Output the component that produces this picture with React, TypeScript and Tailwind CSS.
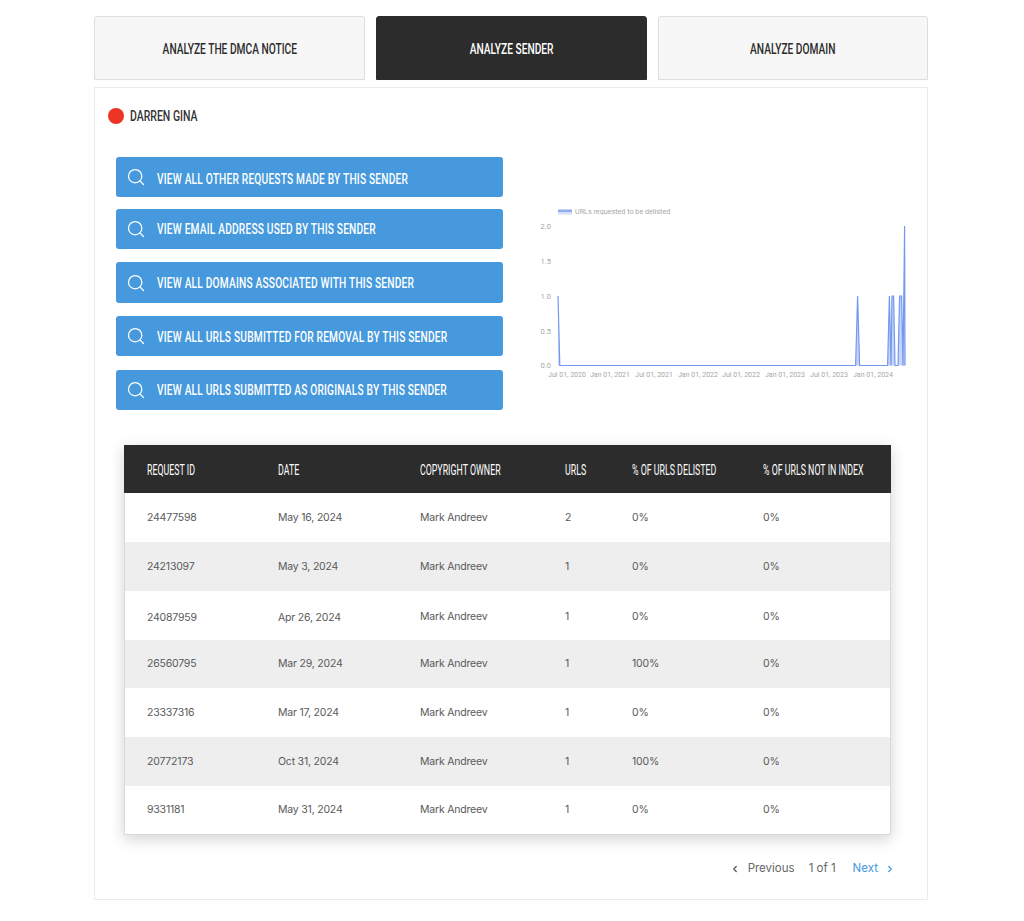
import React from "react";
import { Search, ChevronLeft, ChevronRight } from "lucide-react";

const tabs = [
  { title: "ANALYZE THE DMCA NOTICE", active: false },
  { title: "ANALYZE SENDER", active: true },
  { title: "ANALYZE DOMAIN", active: false },
];

const actions = [
  { title: "VIEW ALL OTHER REQUESTS MADE BY THIS SENDER", cls: "mb-[12px] h-[40px]", text: "pt-[4px]" },
  { title: "VIEW EMAIL ADDRESS USED BY THIS SENDER", cls: "mb-[13px] h-[40px]", text: "" },
  { title: "VIEW ALL DOMAINS ASSOCIATED WITH THIS SENDER", cls: "mb-[13px] h-[41px]", text: "pt-[2px]" },
  { title: "VIEW ALL URLS SUBMITTED FOR REMOVAL BY THIS SENDER", cls: "mb-[14px] h-[40px]", text: "pt-[2px]" },
  { title: "VIEW ALL URLS SUBMITTED AS ORIGINALS BY THIS SENDER", cls: "h-[40px]", text: "" },
];

const rows = [
  ["24477598", "May 16, 2024", "Mark Andreev", "2", "0%", "0%"],
  ["24213097", "May 3, 2024", "Mark Andreev", "1", "0%", "0%"],
  ["24087959", "Apr 26, 2024", "Mark Andreev", "1", "0%", "0%"],
  ["26560795", "Mar 29, 2024", "Mark Andreev", "1", "100%", "0%"],
  ["23337316", "Mar 17, 2024", "Mark Andreev", "1", "0%", "0%"],
  ["20772173", "Oct 31, 2024", "Mark Andreev", "1", "100%", "0%"],
  ["9331181", "May 31, 2024", "Mark Andreev", "1", "0%", "0%"],
];

const rowHeights = ["h-[49px]", "h-[49px]", "h-[49px]", "h-[48px]", "h-[49px]", "h-[49px]", "h-[48px]"];

const headers = ["REQUEST ID", "DATE", "COPYRIGHT OWNER", "URLS", "% OF URLS DELISTED", "% OF URLS NOT IN INDEX"];
const gridCols = "grid grid-cols-[131px_142px_145px_67px_131px_1fr]";
// Oswald нет, поэтому сужаем Roboto по горизонтали
const narrow = "font-['Roboto',sans-serif] whitespace-nowrap inline-block";

const xTicks = [
  ["Jul 01, 2020", 567],
  ["Jan 01, 2021", 610],
  ["Jul 01, 2021", 654],
  ["Jan 01, 2022", 698],
  ["Jul 01, 2022", 741],
  ["Jan 01, 2023", 785],
  ["Jul 01, 2023", 829],
  ["Jan 01, 2024", 873],
] as const;

const yTicks = [
  ["2.0", 226],
  ["1.5", 261],
  ["1.0", 296],
  ["0.5", 331],
  ["0.0", 365.5],
] as const;

const line =
  "M558 296 L559.8 365.5 L855.6 365.5 L857.6 296 L859.6 365.5 L887.6 365.5 L889.4 296 L891 365.5 L892 296 L893.6 296 L895 365.5 L898 365.5 L899.6 296 L901.6 296 L903 365.5 L904.6 226 L905 365.5";

function Chart() {
  return (
    <svg viewBox="520 190 400 200" className="w-[400px] h-[200px]">
      <rect x="558" y="209.5" width="14" height="2.5" fill="#8fabf2" />
      <rect x="558" y="212" width="14" height="2.5" fill="#d3def9" />
      <text x="575" y="214" fontSize="7.2" fill="#a6a6a6" fontFamily="Roboto, sans-serif">
        URLs requested to be delisted
      </text>
      {yTicks.map(([t, y]) => (
        <text key={t} x="551" y={y + 2.5} fontSize="7.5" textAnchor="end" fill="#a6a6a6" fontFamily="Roboto, sans-serif">
          {t}
        </text>
      ))}
      {xTicks.map(([t, x]) => (
        <text key={t} x={x} y="376.5" fontSize="7" textAnchor="middle" fill="#a6a6a6" fontFamily="Roboto, sans-serif">
          {t}
        </text>
      ))}
      <path d={"M558 365.5 L" + line.slice(1) + " Z"} fill="#c6d5f8" stroke="none" />
      <path d={line} fill="none" stroke="#7398ef" strokeWidth="1.2" />
    </svg>
  );
}

export default function App() {
  return (
    <div className="w-[1024px] h-[921px] bg-white pt-[16px] pl-[94px] font-['Inter',sans-serif] overflow-hidden">
      <div className="w-[834px]">
        {/* Вкладки */}
        <div className="grid grid-cols-[271px_271px_270px] gap-[11px] mb-[7px]">
          {tabs.map((tab) => (
            <div
              key={tab.title}
              className={`h-[64px] pt-[2px] flex items-center justify-center rounded-t-[3px] border ${
                tab.active ? "bg-[#2c2c2c] border-[#2c2c2c] text-white" : "bg-[#f7f7f7] border-[#dedede] text-[#2c2c2c]"
              }`}
            >
              <span className={`${narrow} text-[15px] font-medium scale-x-[0.68]`}>{tab.title}</span>
            </div>
          ))}
        </div>

        <div className="h-[813px] border border-[#ebebeb] pt-[20px]">
          <div className="flex items-center pl-[13px] h-[16px]">
            <div className="w-[16px] h-[16px] rounded-full bg-[#ee3524]" />
            <span className={`${narrow} ml-[6px] text-[15px] font-medium text-[#333] origin-left scale-x-[0.7]`}>DARREN GINA</span>
          </div>

          <div className="flex mt-[33px] pl-[21px]">
            <div className="w-[387px] shrink-0">
              {actions.map((a) => (
                <div key={a.title} className={`flex items-center rounded-[3px] bg-[#4699dc] pl-[10px] text-white ${a.cls}`}>
                  <Search size={20} strokeWidth={1.5} className="shrink-0" />
                  <span className={`${narrow} ml-[11px] text-[15px] font-medium tracking-[0.27px] origin-left scale-x-[0.68] ${a.text}`}>{a.title}</span>
                </div>
              ))}
            </div>
            <div className="ml-[17px] mt-[33px]">
              <Chart />
            </div>
          </div>

          <div className="ml-[29px] mt-[35px] w-[767px] border border-[#d9d9d9] border-t-0 shadow-[0_4px_14px_rgba(0,0,0,0.18)]">
            <div className={`${gridCols} -mx-[1px] pl-[23px] h-[48px] items-center bg-[#2c2c2c] text-white`}>
              {headers.map((h) => (
                <div key={h}>
                  <span className={`${narrow} text-[14px] origin-left scale-x-[0.63]`}>{h}</span>
                </div>
              ))}
            </div>
            {rows.map((row, i) => (
              <div
                key={row[0]}
                className={`${gridCols} pl-[22px] items-center text-[10.5px] tracking-[-0.2px] text-[#5a5a5a] ${rowHeights[i]} ${i % 2 === 1 ? "bg-[#eeeeee]" : "bg-white"}`}
              >
                {row.map((cell, j) => (
                  <div key={j} className={i === 2 ? (j < 2 ? "pt-[5px]" : "pt-[2px]") : ""}>
                    {cell}
                  </div>
                ))}
              </div>
            ))}
          </div>

          <div className="flex items-center justify-end mt-[25px] pr-[32px] text-[11.5px] text-[#666]">
            <ChevronLeft size={10} strokeWidth={3} className="text-[#555]" />
            <span className="ml-[8px]">Previous</span>
            <span className="ml-[14px]">1 of 1</span>
            <span className="ml-[17px] text-[#4699dc]">Next</span>
            <ChevronRight size={10} strokeWidth={3} className="ml-[7px] text-[#4699dc]" />
          </div>
        </div>
      </div>
    </div>
  );
}
